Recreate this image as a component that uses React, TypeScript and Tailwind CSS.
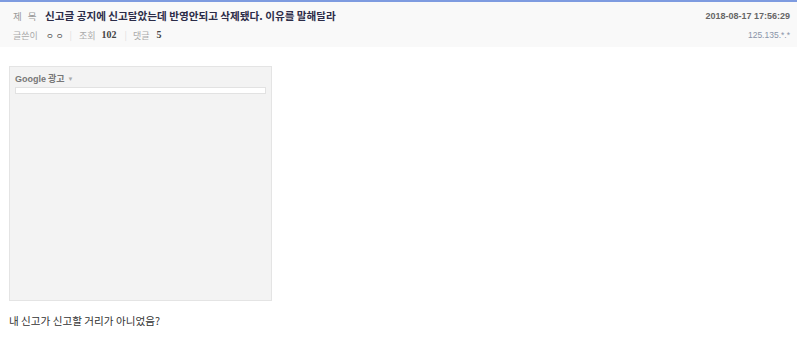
import React from "react";

const KR = { fontFamily: '"Noto Sans CJK KR", "Noto Sans", sans-serif' };
const EN = { fontFamily: '"Liberation Sans", Arial, sans-serif' };
const SERIF = { fontFamily: '"Liberation Serif", "Times New Roman", serif' };

export default function App() {
  return (
    <div className="w-[800px] h-[348px] bg-white overflow-hidden" style={KR}>
      <div className="mr-[3px] border-t-2 border-[#7e9be0] bg-[#f9f9f9] h-[47px] flex justify-between pl-[13px] pr-[7px]">
        <div className="flex flex-col">
          <div className="flex items-center h-[27px] pt-[2px]">
            <span className="w-[32px] text-[9.5px] text-[#999] tracking-[2px]">제 목</span>
            <span className="text-[10.6px] font-bold text-[#2c2c48] leading-none">
              신고글 공지에 신고달았는데 반영안되고 삭제됐다. 이유를 말해달라
            </span>
          </div>
          <div className="flex items-center h-[12px] text-[9px] leading-none">
            <span className="w-[33px] text-[#aaa]">글쓴이</span>
            <span className="text-[#555] text-[8.5px]">ㅇ ㅇ</span>
            <span className="text-[#ddd] ml-[6px] mr-[7px]">|</span>
            <span className="text-[#aaa] mr-[6px]">조회</span>
            <span className="text-[#444] font-bold text-[10px]" style={SERIF}>102</span>
            <span className="text-[#ddd] ml-[8px] mr-[6px]">|</span>
            <span className="text-[#aaa] mr-[7px]">댓글</span>
            <span className="text-[#444] font-bold text-[10px]" style={SERIF}>5</span>
          </div>
        </div>
        <div className="flex flex-col items-end">
          <div className="h-[27px] pt-[2px] flex items-center text-[9px] font-bold text-[#666]" style={EN}>
            2018-08-17 17:56:29
          </div>
          <div className="h-[12px] flex items-center text-[8.5px] text-[#8a94a8]" style={EN}>
            125.135.*.*
          </div>
        </div>
      </div>

      <div className="px-[9px] pt-[19px]">
        <div className="w-[263px] h-[235px] bg-[#f3f3f3] border border-[#e4e4e4] px-[5px] pt-[6px]">
          <div className="flex items-center text-[9px] font-bold text-[#777] leading-[12px]" style={EN}>
            Google <span style={KR} className="ml-[2px]">광고</span>
            <span className="ml-[3px] text-[6px] text-[#aaa] font-normal">▼</span>
          </div>
          <div className="mt-[2px] h-[7px] bg-white border border-[#e2e2e2]" />
        </div>
        <div className="mt-[12px] text-[10.6px] text-[#333]">내 신고가 신고할 거리가 아니었음?</div>
      </div>
    </div>
  );
}
